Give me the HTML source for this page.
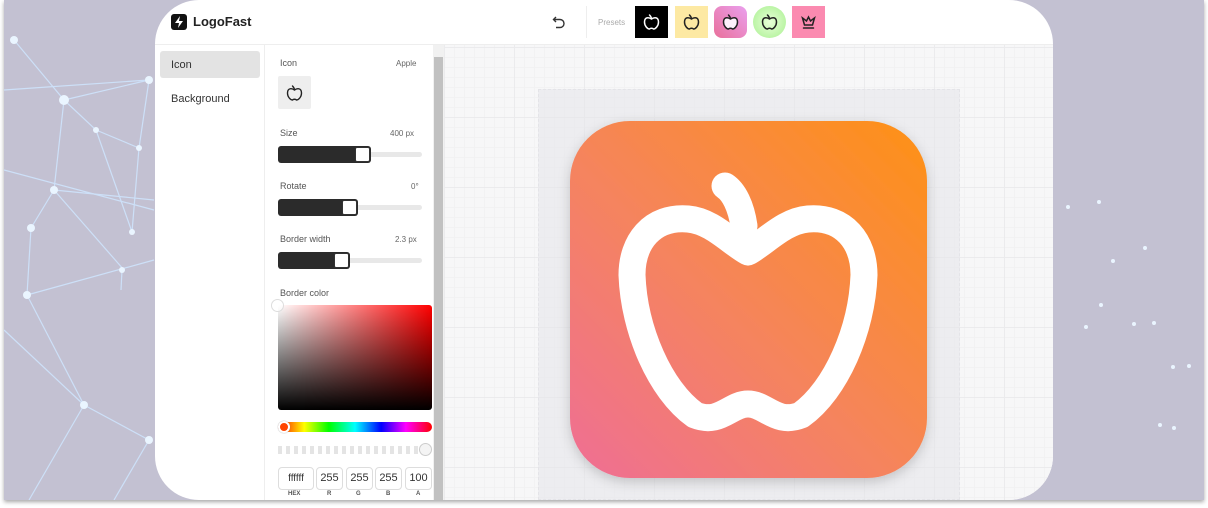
<!DOCTYPE html>
<html><head><meta charset="utf-8"><style>
*{box-sizing:border-box;margin:0;padding:0}
body{width:1208px;height:508px;background:#fff;font-family:"Liberation Sans",sans-serif;position:relative;overflow:hidden}
#bg{position:absolute;left:4px;top:0;width:1200px;height:500px;background:#c3c1d2;box-shadow:0 2px 4px rgba(0,0,0,.35);overflow:hidden}
#card{position:absolute;left:151px;top:0;width:898px;height:500px;background:#fff;border-radius:44px;overflow:hidden}
.hdr{position:absolute;left:0;top:0;width:898px;height:45px;border-bottom:1px solid #eee}
.t{position:absolute;color:#333;font-size:10px}
</style></head><body>
<div id="bg">
<svg width="1200" height="500" style="position:absolute;left:0;top:0">
<g stroke="#cfe6ff" stroke-width="1.2" opacity=".85">
<line x1="10" y1="40" x2="60" y2="100"/><line x1="60" y1="100" x2="145" y2="80"/><line x1="60" y1="100" x2="92" y2="130"/><line x1="60" y1="100" x2="50" y2="190"/><line x1="145" y1="80" x2="135" y2="148"/><line x1="92" y1="130" x2="135" y2="148"/><line x1="50" y1="190" x2="27" y2="228"/><line x1="50" y1="190" x2="120" y2="270"/><line x1="27" y1="228" x2="23" y2="295"/><line x1="23" y1="295" x2="80" y2="405"/><line x1="80" y1="405" x2="145" y2="440"/><line x1="80" y1="405" x2="25" y2="500"/><line x1="118" y1="270" x2="117" y2="290"/><line x1="92" y1="130" x2="128" y2="232"/><line x1="135" y1="148" x2="128" y2="232"/><line x1="0" y1="90" x2="145" y2="80"/><line x1="0" y1="170" x2="150" y2="210"/><line x1="23" y1="295" x2="150" y2="260"/><line x1="0" y1="330" x2="80" y2="405"/><line x1="145" y1="440" x2="110" y2="500"/><line x1="50" y1="190" x2="150" y2="200"/>
</g>
<g fill="#eaf5ff"><circle cx="10" cy="40" r="4"/><circle cx="60" cy="100" r="5"/><circle cx="145" cy="80" r="4"/><circle cx="92" cy="130" r="3"/><circle cx="135" cy="148" r="3"/><circle cx="50" cy="190" r="4"/><circle cx="27" cy="228" r="4"/><circle cx="128" cy="232" r="3"/><circle cx="23" cy="295" r="4"/><circle cx="118" cy="270" r="3"/><circle cx="80" cy="405" r="4"/><circle cx="145" cy="440" r="4"/>
<circle cx="1064" cy="207" r="2"/><circle cx="1095" cy="202" r="2"/><circle cx="1141" cy="248" r="2"/><circle cx="1109" cy="261" r="2"/><circle cx="1097" cy="305" r="2"/><circle cx="1082" cy="327" r="2"/><circle cx="1130" cy="324" r="2"/><circle cx="1150" cy="323" r="2"/><circle cx="1169" cy="367" r="2"/><circle cx="1185" cy="366" r="2"/><circle cx="1156" cy="425" r="2"/><circle cx="1170" cy="428" r="2"/></g>
</svg>
<div id="card">
<div class="hdr">
 <div style="position:absolute;left:16px;top:14px;width:16px;height:16px;background:#111;border-radius:3px"><svg width="16" height="16"><path d="M9 2 L4 9 H8 L7 14 L12 7 H8 Z" fill="#fff"/></svg></div>
 <div class="t" style="left:38px;top:14px;font-size:13px;font-weight:bold;color:#222">LogoFast</div>
 <svg style="position:absolute;left:397px;top:15px" width="14" height="14"><path d="M4 2 L1.5 4.5 L4 7 M1.5 4.5 H8 A4 4 0 0 1 8 12.5 H4" fill="none" stroke="#333" stroke-width="1.4"/></svg>
 <div style="position:absolute;left:431px;top:6px;width:1px;height:32px;background:#eee"></div>
 <div class="t" style="left:443px;top:18px;font-size:8px;color:#aaa">Presets</div>
 <div style="position:absolute;left:480px;top:6px;width:33px;height:32px;background:#000"></div>
 <div style="position:absolute;left:520px;top:6px;width:33px;height:32px;background:#fde9a3"></div>
 <div style="position:absolute;left:559px;top:6px;width:33px;height:32px;background:linear-gradient(45deg,#e9709a,#eaa0ee);border-radius:8px"></div>
 <div style="position:absolute;left:598px;top:6px;width:33px;height:32px;background:radial-gradient(#e8ffd8,#a8f090);border-radius:50%"></div>
 <div style="position:absolute;left:637px;top:6px;width:33px;height:32px;background:#fb8ab0"></div>
 <svg style="position:absolute;left:480px;top:6px" width="200" height="32">
  <g fill="none" stroke-width="1.5" stroke-linecap="round">
   <g stroke="#fff" transform="translate(16.5,16)"><path d="M0 -3 C-3 -5 -7 -5 -7 0 C-7 4 -4 7 -2 7 C-1 6 1 6 2 7 C4 7 7 4 7 0 C7 -5 3 -5 0 -3 Z M0 -3 C0 -5 -1 -6 -2 -7"/></g>
   <g stroke="#222" transform="translate(56.5,16)"><path d="M0 -3 C-3 -5 -7 -5 -7 0 C-7 4 -4 7 -2 7 C-1 6 1 6 2 7 C4 7 7 4 7 0 C7 -5 3 -5 0 -3 Z M0 -3 C0 -5 -1 -6 -2 -7"/></g>
   <g stroke="#222" transform="translate(95.5,16)"><path d="M0 -3 C-3 -5 -7 -5 -7 0 C-7 4 -4 7 -2 7 C-1 6 1 6 2 7 C4 7 7 4 7 0 C7 -5 3 -5 0 -3 Z M0 -3 C0 -5 -1 -6 -2 -7" fill="#fdf0fa"/></g>
   <g stroke="#222" transform="translate(134.5,16)"><path d="M0 -3 C-3 -5 -7 -5 -7 0 C-7 4 -4 7 -2 7 C-1 6 1 6 2 7 C4 7 7 4 7 0 C7 -5 3 -5 0 -3 Z M0 -3 C0 -5 -1 -6 -2 -7"/></g>
   <g stroke="#222" transform="translate(173.5,16)"><path d="M-6 -4 L-4 3 H4 L6 -4 L2 -1 L0 -5 L-2 -1 Z M-5 6 H5"/></g>
  </g>
 </svg>
</div>
<div style="position:absolute;left:0;top:45px;width:110px;height:455px;border-right:1px solid #eee"></div>
<div style="position:absolute;left:5px;top:51px;width:100px;height:27px;background:#e3e3e3;border-radius:3px"></div>
<div class="t" style="left:16px;top:59px;font-size:11px">Icon</div>
<div class="t" style="left:16px;top:93px;font-size:11px">Background</div>
<div class="t" style="left:125px;top:58px;font-size:9px;color:#555">Icon</div>
<div class="t" style="left:241px;top:59px;font-size:8px;color:#666">Apple</div>
<div style="position:absolute;left:123px;top:76px;width:33px;height:33px;background:#eee;border-radius:2px"></div>
<svg style="position:absolute;left:123px;top:76px" width="33" height="33"><g transform="translate(16.5,17)" fill="none" stroke="#222" stroke-width="1.4" stroke-linecap="round"><path d="M0 -3 C-3 -5 -7 -5 -7 0 C-7 4 -4 7 -2 7 C-1 6 1 6 2 7 C4 7 7 4 7 0 C7 -5 3 -5 0 -3 Z M0 -3 C0 -5 -1 -6 -2 -7"/></g></svg>

<div class="t" style="left:125px;top:128px;font-size:9px;color:#555">Size</div>
<div class="t" style="left:235px;top:129px;font-size:8px;color:#666">400 px</div>
<div style="position:absolute;left:123px;top:152px;width:144px;height:5px;background:#e8e8e8;border-radius:3px"></div>
<div style="position:absolute;left:123px;top:146px;width:93px;height:17px;background:#2b2b2b;border-radius:3px"></div>
<div style="position:absolute;left:200px;top:147px;width:15px;height:15px;background:#fff;border:1px solid #333;border-radius:2px"></div>

<div class="t" style="left:125px;top:181px;font-size:9px;color:#555">Rotate</div>
<div class="t" style="left:256px;top:182px;font-size:8px;color:#666">0°</div>
<div style="position:absolute;left:123px;top:205px;width:144px;height:5px;background:#e8e8e8;border-radius:3px"></div>
<div style="position:absolute;left:123px;top:199px;width:80px;height:17px;background:#2b2b2b;border-radius:3px"></div>
<div style="position:absolute;left:187px;top:200px;width:15px;height:15px;background:#fff;border:1px solid #333;border-radius:2px"></div>

<div class="t" style="left:125px;top:234px;font-size:9px;color:#555">Border width</div>
<div class="t" style="left:240px;top:235px;font-size:8px;color:#666">2.3 px</div>
<div style="position:absolute;left:123px;top:258px;width:144px;height:5px;background:#e8e8e8;border-radius:3px"></div>
<div style="position:absolute;left:123px;top:252px;width:72px;height:17px;background:#2b2b2b;border-radius:3px"></div>
<div style="position:absolute;left:179px;top:253px;width:15px;height:15px;background:#fff;border:1px solid #333;border-radius:2px"></div>

<div class="t" style="left:125px;top:288px;font-size:9px;color:#555">Border color</div>
<div style="position:absolute;left:123px;top:305px;width:154px;height:105px;border-radius:3px;background:linear-gradient(to top,#000,rgba(0,0,0,0)),linear-gradient(to right,#fff,#f00)"></div>
<div style="position:absolute;left:116px;top:299px;width:13px;height:13px;border-radius:50%;border:1px solid #ddd;background:rgba(255,255,255,.6)"></div>
<div style="position:absolute;left:123px;top:422px;width:154px;height:10px;border-radius:5px;background:linear-gradient(to right,#f00,#ff0 17%,#0f0 33%,#0ff 50%,#00f 67%,#f0f 83%,#f00)"></div>
<div style="position:absolute;left:123px;top:421px;width:12px;height:12px;border-radius:50%;border:2px solid #fff;background:#f40;box-shadow:0 0 1px #888"></div>
<div style="position:absolute;left:123px;top:446px;width:142px;height:8px;background:repeating-linear-gradient(90deg,#ddd 0 4px,#fff 4px 8px);opacity:.8"></div>
<div style="position:absolute;left:264px;top:443px;width:13px;height:13px;border-radius:50%;border:1px solid #ccc;background:#f4f4f4"></div>
<div style="position:absolute;left:123px;top:467px;width:36px;height:23px;border:1px solid #ddd;border-radius:4px;font-size:10px;text-align:center;line-height:21px;color:#333">ffffff</div>
<div style="position:absolute;left:161px;top:467px;width:27px;height:23px;border:1px solid #ddd;border-radius:4px;font-size:11px;text-align:center;line-height:21px;color:#333">255</div>
<div style="position:absolute;left:191px;top:467px;width:27px;height:23px;border:1px solid #ddd;border-radius:4px;font-size:11px;text-align:center;line-height:21px;color:#333">255</div>
<div style="position:absolute;left:220px;top:467px;width:27px;height:23px;border:1px solid #ddd;border-radius:4px;font-size:11px;text-align:center;line-height:21px;color:#333">255</div>
<div style="position:absolute;left:250px;top:467px;width:27px;height:23px;border:1px solid #ddd;border-radius:4px;font-size:11px;text-align:center;line-height:21px;color:#333">100</div>
<div class="t" style="left:133px;top:491px;font-size:6px;font-weight:bold;color:#555">HEX</div>
<div class="t" style="left:172px;top:491px;font-size:6px;font-weight:bold;color:#555">R</div>
<div class="t" style="left:201px;top:491px;font-size:6px;font-weight:bold;color:#555">G</div>
<div class="t" style="left:231px;top:491px;font-size:6px;font-weight:bold;color:#555">B</div>
<div class="t" style="left:261px;top:491px;font-size:6px;font-weight:bold;color:#555">A</div>
<div style="position:absolute;left:278px;top:45px;width:11px;height:455px;background:#f1f1f1"></div>
<div style="position:absolute;left:279px;top:57px;width:9px;height:443px;background:#c1c1c1"></div>
<div style="position:absolute;left:289px;top:45px;width:609px;height:455px;background-color:#f7f7f8;background-image:linear-gradient(#ebebed 1px,transparent 1px),linear-gradient(90deg,#ebebed 1px,transparent 1px),linear-gradient(#f2f2f3 1px,transparent 1px),linear-gradient(90deg,#f2f2f3 1px,transparent 1px);background-size:70px 70px,70px 70px,10px 10px,10px 10px;background-position:0 2px,0 2px,0 2px,0 2px"></div>
<div style="position:absolute;left:383px;top:89px;width:422px;height:411px;background:rgba(230,230,234,.55);border:1px dashed #e4e4e8"></div>
</div>
<svg style="position:absolute;left:0;top:0" width="1200" height="500">
<defs><linearGradient id="g" x1="0" y1="1" x2="1" y2="0"><stop offset="0" stop-color="#ef6e95"/><stop offset=".45" stop-color="#f5845e"/><stop offset="1" stop-color="#fe9115"/></linearGradient>
<filter id="s" x="-20%" y="-20%" width="140%" height="140%"><feDropShadow dx="0" dy="4" stdDeviation="6" flood-opacity=".18"/></filter></defs>
<g transform="translate(-4,0)">
<rect x="570" y="121" width="357" height="357" rx="60" fill="url(#g)" filter="url(#s)"/>
<g fill="none" stroke="#fff" stroke-width="27" stroke-linecap="round" stroke-linejoin="round">
<path d="M748 252 C730 242 712 221 688 219 C652 216 632 242 632 275 C634 330 660 390 695 415 C720 425 730 404 748 404 C766 404 776 425 801 415 C836 390 862 330 864 275 C864 242 844 216 808 219 C784 221 766 242 748 252 Z"/>
<path d="M744 226 C741 206 734 192 725 186"/>
</g></g>
</svg>
</div>
</body></html>
